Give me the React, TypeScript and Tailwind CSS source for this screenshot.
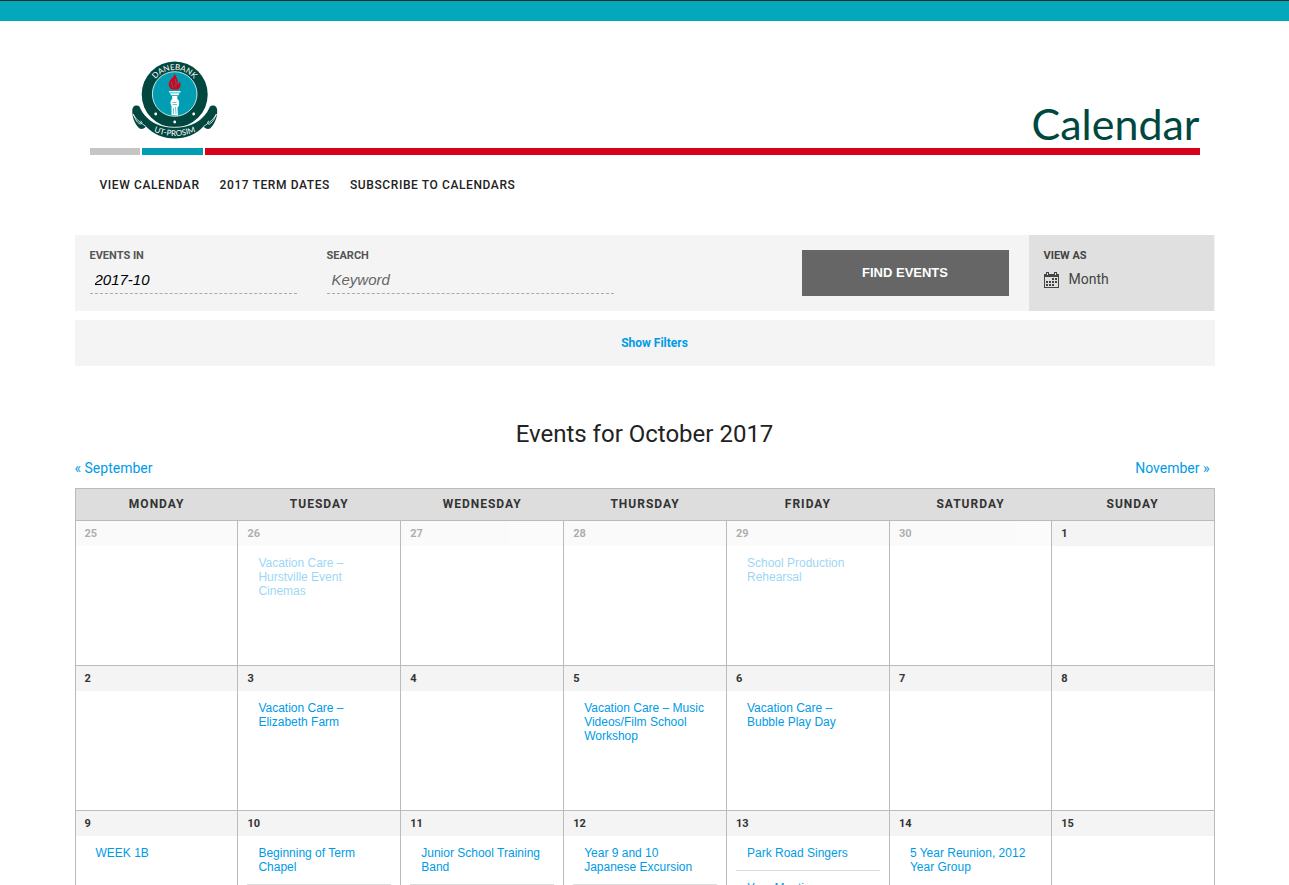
type CalendarEvent = { title: string; followed?: boolean };
type Day = { date: number; past?: boolean; events?: CalendarEvent[] };

const weekdays = ['Monday', 'Tuesday', 'Wednesday', 'Thursday', 'Friday', 'Saturday', 'Sunday'];

const weeks: Day[][] = [
  [
    { date: 25, past: true },
    { date: 26, past: true, events: [{ title: 'Vacation Care – Hurstville Event Cinemas' }] },
    { date: 27, past: true },
    { date: 28, past: true },
    { date: 29, past: true, events: [{ title: 'School Production Rehearsal' }] },
    { date: 30, past: true },
    { date: 1 },
  ],
  [
    { date: 2 },
    { date: 3, events: [{ title: 'Vacation Care – Elizabeth Farm' }] },
    { date: 4 },
    { date: 5, events: [{ title: 'Vacation Care – Music Videos/Film School Workshop' }] },
    { date: 6, events: [{ title: 'Vacation Care – Bubble Play Day' }] },
    { date: 7 },
    { date: 8 },
  ],
  [
    { date: 9, events: [{ title: 'WEEK 1B' }] },
    { date: 10, events: [{ title: 'Beginning of Term Chapel', followed: true }] },
    { date: 11, events: [{ title: 'Junior School Training Band', followed: true }] },
    { date: 12, events: [{ title: 'Year 9 and 10 Japanese Excursion', followed: true }] },
    { date: 13, events: [{ title: 'Park Road Singers', followed: true }, { title: 'Year Meeting' }] },
    { date: 14, events: [{ title: '5 Year Reunion, 2012 Year Group' }] },
    { date: 15 },
  ],
];

function Logo() {
  return (
    <svg viewBox="0 0 86 78" className="h-[78px] w-[86px]" role="img" aria-label="Danebank">
      <defs>
        <path id="arc-top" d="M 18.1 33.5 A 24.6 24.6 0 0 1 67.3 33.5" />
        <path id="arc-bottom" d="M 17 68.5 Q 42.7 81.5 68.4 68.5" />
      </defs>
      <circle cx="42.7" cy="33.5" r="33" fill="#00473f" />
      <path
        d="M0.3 50 C0 45 4.500 43 8 46 C14 60 27 66.300 42.700 66.300 C58.400 66.300 71.400 60 77.400 46 C81 43 85.500 45 85.200 50 C85.500 57 82 64 78 67.500 C75.500 68.500 73 67.500 71.500 65.500 C64 73.500 54 77.500 42.700 77.500 C31.500 77.500 21.500 73.500 14 65.500 C12.500 67.500 10 68.500 7.500 67.500 C3.500 64 0 57 0.300 50 Z"
        fill="#00473f"
      />
      <g fill="none" stroke="#fff" strokeWidth="0.8">
        <path d="M8 46 C14 60 27 66.300 42.700 66.300 C58.400 66.300 71.400 60 77.400 46" />
        <path d="M1 53 C4 59 9 62 14 65.500 M1 53 C3 57 4 61 8 63 C10.500 63.500 10.500 60.500 8.500 60" />
        <path d="M84.500 53 C81.500 59 76.500 62 71.500 65.500 M84.500 53 C82.500 57 81.500 61 77.500 63 C75 63.500 75 60.500 77 60" />
      </g>
      <circle cx="42.700" cy="33" r="22.300" fill="#009db3" stroke="#fff" strokeWidth="0.800" />
      <path
        d="M43 12.500 C42 17 36 19 36.800 24 C37 26 38.500 27.500 40 28.500 L46 28.500 C48.500 26.500 49.500 23.500 47.500 20.500 C47.200 22 46.500 23 45.500 23.500 C47 18.500 43.500 16 43 12.500 Z"
        fill="#d9001b"
      />
      <path d="M39.500 20.500 C39 23 41 24 41 27 M43 18 C43.500 20 45 22 43.500 26" fill="none" stroke="#009db3" strokeWidth="0.700" />
      <g fill="#fff">
        <path d="M37 30 H48.500 V31.500 H37 Z M38 32.200 H47.500 L46.500 34.300 H39 Z M40 35 H45.500 L45 39 H40.500 Z" />
        <path d="M40 38 C38 40 38 43 39.500 45 L39.500 54 L46 54.500 L45.500 47 C48 44 47.500 40 45.500 38 Z" />
        <circle cx="23.700" cy="53" r="1.400" />
        <circle cx="61.700" cy="53" r="1.400" />
        <circle cx="42.700" cy="61" r="1.400" />
      </g>
      <path d="M40.500 41.500 H44.500 M40.500 43.500 H45 M41.500 47 V53 M43.500 46 L44 53" stroke="#009db3" strokeWidth="0.600" />
      <g fill="#fff" fontSize="8" textAnchor="middle" className="font-['Lato',sans-serif]">
        <text>
          <textPath href="#arc-top" startOffset="50%">DANEBANK</textPath>
        </text>
        <text>
          <textPath href="#arc-bottom" startOffset="50%">UT-PROSIM</textPath>
        </text>
      </g>
    </svg>
  );
}

function CalendarIcon() {
  return (
    <svg viewBox="0 0 15 16" className="mt-0.5 h-4 w-[15px]" fill="#444" shapeRendering="crispEdges" aria-hidden="true">
      <path d="M0 2h15v14H0zM1 5v10h13V5z" fillRule="evenodd" />
      <path d="M2 0h3v4H2zM10 0h3v4h-3z" />
      <path d="M3 1h1v2H3zM11 1h1v2h-1z" fill="#e0e0e0" />
      <path d="M8 6h2v2H8zM11 6h2v2h-2zM2 9h2v2H2zM5 9h2v2H5zM8 9h2v2H8zM11 9h2v2h-2zM2 12h2v2H2zM5 12h2v2H5zM8 12h2v2H8z" />
    </svg>
  );
}

function DayCell({ day }: { day: Day }) {
  return (
    <td className="h-[145px] border border-[#bbb] p-0 align-top">
      <div className={day.past ? 'opacity-40' : ''}>
        <div className="bg-[#f4f4f4] px-[9px] text-[11px] leading-[25px] font-bold text-[#333]">{day.date}</div>
        <div className="px-[9px] font-['Liberation_Sans',sans-serif] text-xs leading-[14px]">
          {day.events?.map((event) => (
            <div
              key={event.title}
              className={event.followed ? 'border-b border-[#ddd] px-[11px] py-[10px]' : 'px-[11px] py-[10px]'}
            >
              <a href="#event" className="block text-[#009be6]">{event.title}</a>
            </div>
          ))}
        </div>
      </div>
    </td>
  );
}

export default function App() {
  return (
    <div className="bg-white font-['Roboto',sans-serif] text-[#222]">
      <div className="h-[21px] border-t border-[#1f2a2e] bg-[#03a9bb]" />
      <div className="mx-auto max-w-[1140px]">
        <header className="px-[15px] pt-10">
          <div className="flex h-[87px] items-start justify-between">
            <a href="#home" className="ml-[42px]"><Logo /></a>
            <h1 className="mt-9 font-['Lato',sans-serif] text-[43px] leading-[54px] text-[#00473f]">Calendar</h1>
          </div>
          <div className="flex h-[7px] gap-0.5">
            <div className="w-[50px] bg-[#c5c5c5]" />
            <div className="w-[61px] bg-[#009db3]" />
            <div className="flex-1 bg-[#d9001b]" />
          </div>
          <nav className="mt-5 flex gap-5 pl-[10px] text-xs leading-5 font-medium tracking-wider uppercase">
            <a href="#calendar">View Calendar</a>
            <a href="#terms">2017 Term Dates</a>
            <a href="#subscribe">Subscribe to Calendars</a>
          </nav>
        </header>

        <form className="mt-10 flex h-[76px] bg-[#f4f4f4]" onSubmit={(e) => e.preventDefault()}>
          <div className="flex flex-1 items-start pt-[15px] pr-5 pl-[15px]">
            <div className="mr-[30px] w-[207px]">
              <label htmlFor="month" className="block text-[11px] leading-[11px] font-bold text-[#555] uppercase">Events In</label>
              <input
                id="month"
                defaultValue="2017-10"
                className="mt-[5px] block h-7 w-full border-b border-dashed border-[#aaa] bg-transparent px-[5px] font-['Liberation_Sans',sans-serif] text-[15px] text-black italic outline-none"
              />
            </div>
            <div className="w-[287px]">
              <label htmlFor="keyword" className="block text-[11px] leading-[11px] font-bold text-[#555] uppercase">Search</label>
              <input
                id="keyword"
                placeholder="Keyword"
                className="mt-[5px] block h-7 w-full border-b border-dashed border-[#aaa] bg-transparent px-[5px] font-['Liberation_Sans',sans-serif] text-[15px] italic outline-none placeholder:text-[#666]"
              />
            </div>
            <button type="submit" className="ml-auto h-[46px] w-[207px] bg-[#666] font-['Liberation_Sans',sans-serif] text-[13px] font-bold text-white uppercase">
              Find Events
            </button>
          </div>
          <div className="mr-px w-[185px] bg-[#e0e0e0] pt-[15px] pl-[15px] text-[#444]">
            <div id="view-label" className="text-[11px] leading-[11px] font-bold uppercase">View As</div>
            <button type="button" aria-labelledby="view-label view-value" className="mt-[9px] flex items-start gap-[10px] text-sm leading-[18px]">
              <CalendarIcon />
              <span id="view-value">Month</span>
            </button>
          </div>
        </form>

        <div className="mt-[9px] flex h-[46px] items-center justify-center bg-[#f4f4f4] pl-5">
          <button type="button" className="text-xs font-bold text-[#009be6]">Show Filters</button>
        </div>

        <h2 className="mt-[52px] text-center text-2xl leading-8">Events for October 2017</h2>
        <div className="mt-2 flex h-[30px] justify-between pr-[5px] text-sm leading-5 text-[#009be6]">
          <a href="#september">« September</a>
          <a href="#november">November »</a>
        </div>

        <table className="w-full table-fixed border-collapse">
          <colgroup>
            <col span={5} className="w-[14.3%]" />
            <col span={2} />
          </colgroup>
          <thead>
            <tr>
              {weekdays.map((name) => (
                <th key={name} scope="col" className="h-8 border-y border-[#bbb] bg-[#ddd] p-0 pb-0.5 text-xs font-bold tracking-[1px] text-[#333] uppercase first:border-l last:border-r">
                  {name}
                </th>
              ))}
            </tr>
          </thead>
          <tbody>
            {weeks.map((week) => (
              <tr key={week[0].date}>
                {week.map((day) => (
                  <DayCell key={day.date} day={day} />
                ))}
              </tr>
            ))}
          </tbody>
        </table>
      </div>
    </div>
  );
}
